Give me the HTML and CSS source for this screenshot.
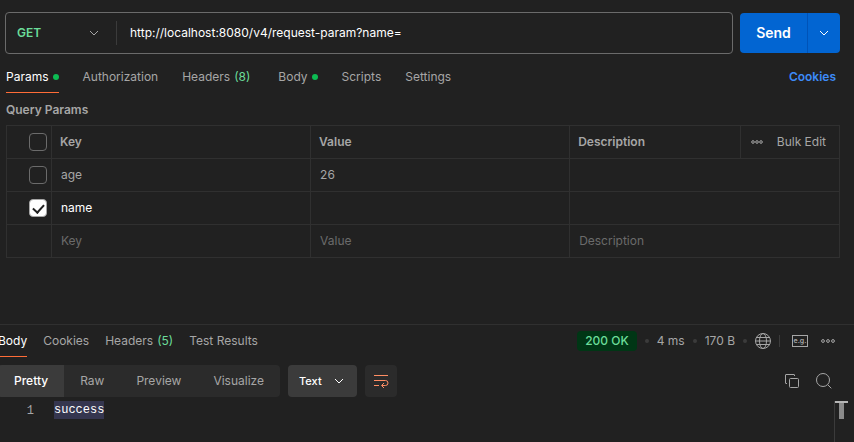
FILE: index.html
```
<!DOCTYPE html>
<html lang="en">
<head>
  <meta charset="UTF-8">
  <title>GET request-param</title>
  <link rel="stylesheet" href="styles.css">
</head>
<body>

  <!-- Request -->
  <main class="request">
    <form class="url-row">
      <div class="url-box">
        <div class="method">
          <select class="method-select" aria-label="Method">
            <option>GET</option>
            <option>POST</option>
            <option>PUT</option>
            <option>DELETE</option>
          </select>
          <svg class="chevron" viewBox="0 0 10 6"><path d="M1 1l4 4 4-4"/></svg>
        </div>
        <input class="url-input" type="text" aria-label="Request URL" value="http://localhost:8080/v4/request-param?name=">
      </div>
      <div class="send-group">
        <button type="button" class="send-btn">Send</button>
        <button type="button" class="send-more" aria-label="Send options">
          <svg class="chevron" viewBox="0 0 10 6"><path d="M1 1l4 4 4-4"/></svg>
        </button>
      </div>
    </form>

    <nav class="tabs">
      <a href="#params" class="tab active">Params<span class="dot"></span></a>
      <a href="#auth" class="tab">Authorization</a>
      <a href="#headers" class="tab tab-count">Headers <span class="count">(8)</span></a>
      <a href="#body" class="tab">Body<span class="dot"></span></a>
      <a href="#scripts" class="tab">Scripts</a>
      <a href="#settings" class="tab">Settings</a>
      <a href="#cookies" class="cookies-link">Cookies</a>
    </nav>

    <section class="params" id="params">
      <h2 class="params-title">Query Params</h2>
      <table class="params-table">
        <colgroup>
          <col class="col-check">
          <col class="col-key">
          <col class="col-value">
          <col class="col-desc">
          <col class="col-tools">
        </colgroup>
        <thead>
          <tr>
            <th class="check-cell"><input type="checkbox" class="check" aria-label="Select all"></th>
            <th>Key</th>
            <th>Value</th>
            <th>Description</th>
            <th class="tools-cell">
              <div class="tools">
                <button class="icon-btn" aria-label="More options">
                  <svg class="more-small" viewBox="0 0 12 4"><circle cx="2" cy="2" r="1.3"/><circle cx="6" cy="2" r="1.3"/><circle cx="10" cy="2" r="1.3"/></svg>
                </button>
                <button class="bulk-btn">Bulk Edit</button>
              </div>
            </th>
          </tr>
        </thead>
        <tbody>
          <tr>
            <td class="check-cell"><input type="checkbox" class="check" aria-label="Use age"></td>
            <td><input class="cell" type="text" aria-label="Key" value="age"></td>
            <td><input class="cell" type="text" aria-label="Value" value="26"></td>
            <td colspan="2"><input class="cell" type="text" aria-label="Description"></td>
          </tr>
          <tr class="enabled">
            <td class="check-cell"><input type="checkbox" class="check" aria-label="Use name" checked></td>
            <td><input class="cell" type="text" aria-label="Key" value="name"></td>
            <td><input class="cell" type="text" aria-label="Value"></td>
            <td colspan="2"><input class="cell" type="text" aria-label="Description"></td>
          </tr>
          <tr>
            <td></td>
            <td><input class="cell" type="text" aria-label="New key" placeholder="Key"></td>
            <td><input class="cell" type="text" aria-label="New value" placeholder="Value"></td>
            <td colspan="2"><input class="cell" type="text" aria-label="New description" placeholder="Description"></td>
          </tr>
        </tbody>
      </table>
    </section>
  </main>

  <!-- Response -->
  <section class="response">
    <div class="response-head">
      <nav class="response-tabs">
        <a href="#res-body" class="tab active">Body</a>
        <a href="#res-cookies" class="tab">Cookies</a>
        <a href="#res-headers" class="tab">Headers <span class="count">(5)</span></a>
        <a href="#res-tests" class="tab">Test Results</a>
      </nav>
      <div class="meta">
        <span class="status">200 OK</span>
        <span class="sep"></span>
        <span>4 ms</span>
        <span class="sep"></span>
        <span>170 B</span>
        <span class="sep"></span>
        <button class="icon-btn" aria-label="Network">
          <svg class="icon-16" viewBox="0 0 16 16"><circle cx="8" cy="8" r="7.5"/><ellipse cx="8" cy="8" rx="3.5" ry="7.5"/><path d="M1.500 4.500h13M1.500 11.500h13M.5 8h15"/></svg>
        </button>
        <span class="bar"></span>
        <button class="example-btn" aria-label="Save as example">e.g.</button>
        <button class="icon-btn" aria-label="More actions">
          <svg class="more" viewBox="0 0 14 4"><circle cx="2" cy="2" r="1.400"/><circle cx="7" cy="2" r="1.400"/><circle cx="12" cy="2" r="1.400"/></svg>
        </button>
      </div>
    </div>

    <div class="toolbar">
      <div class="views">
        <button class="view active">Pretty</button>
        <button class="view">Raw</button>
        <button class="view">Preview</button>
        <button class="view">Visualize</button>
      </div>
      <div class="format">
        <select class="format-select" aria-label="Format">
          <option>Text</option>
          <option>JSON</option>
          <option>XML</option>
          <option>HTML</option>
        </select>
        <svg class="chevron" viewBox="0 0 10 6"><path d="M1 1l4 4 4-4"/></svg>
      </div>
      <button class="wrap-btn" aria-label="Wrap lines">
        <svg class="icon-16" viewBox="0 0 16 16"><path d="M1 2.500h14M1 7.500h11.500a2.500 2.500 0 0 1 0 5H9M1 12.500h5M11 10L8.500 12.500 11 15"/></svg>
      </button>
      <div class="toolbar-right">
        <button class="icon-btn" aria-label="Copy">
          <svg class="icon-16" viewBox="0 0 16 16"><rect x="5.500" y="5.500" width="9" height="9" rx="1"/><path d="M3 10.500H2a.5.5 0 0 1-.5-.5V2a.5.5 0 0 1 .5-.5h8a.5.5 0 0 1 .5.5v1"/></svg>
        </button>
        <button class="icon-btn" aria-label="Search">
          <svg class="icon-16" viewBox="0 0 16 16"><circle cx="7" cy="7" r="6.500"/><path d="M11.700 11.700l3.600 3.600"/></svg>
        </button>
      </div>
    </div>

    <div class="code">
      <span class="line-no">1</span>
      <code class="line"><mark>success</mark></code>
      <div class="ruler"><span class="ruler-top"></span><span class="ruler-stem"></span></div>
    </div>
  </section>

</body>
</html>
```
FILE: styles.css
```
* {
  box-sizing: border-box;
}

body {
  margin: 0;
  min-height: 100vh;
  display: flex;
  flex-direction: column;
  overflow: hidden;
  background: #212121;
  color: #a6a6a6;
  font-family: Inter, "Liberation Sans", sans-serif;
  font-size: 12px;
  line-height: 16px;
}

button, input, select {
  font: inherit;
  color: inherit;
  background: none;
  border: none;
  padding: 0;
  margin: 0;
}

button {
  cursor: pointer;
}

select {
  appearance: none;
  width: 100%;
}

a {
  color: inherit;
  text-decoration: none;
}

svg {
  display: block;
  fill: none;
  stroke: currentColor;
}

.chevron {
  width: 10px;
  height: 6px;
  flex: none;
  pointer-events: none;
}

.icon-16 {
  width: 16px;
  height: 16px;
}

/* Request */
.request {
  flex: 1;
  padding: 12px 14px 0 6px;
}

.url-row {
  display: flex;
  align-items: center;
  gap: 7px;
  margin-left: -1px;
}

.url-box {
  flex: 1;
  display: flex;
  align-items: center;
  height: 42px;
  border: 1px solid #6b6b6b;
  border-radius: 4px;
}

.method {
  display: flex;
  align-items: center;
  width: 111px;
  height: 24px;
  padding: 0 17px 0 11px;
  border-right: 1px solid #3b3b3b;
}

.method-select {
  color: #6bdd9a;
  font-weight: 600;
}

.url-input {
  flex: 1;
  padding-left: 13px;
  color: #fff;
}

.send-group {
  display: flex;
  width: 100px;
  height: 40px;
  border-radius: 4px;
  overflow: hidden;
  background: #0265d2;
  color: #fff;
}

.send-btn {
  flex: 1;
  font-size: 14px;
  font-weight: 600;
}

.send-more {
  display: flex;
  align-items: center;
  justify-content: center;
  width: 33px;
  border-left: 1px solid #0053b8;
}

.tabs {
  display: flex;
  gap: 24px;
  margin-top: 8px;
}

.tab {
  display: flex;
  align-items: center;
  gap: 4px;
  height: 31px;
  border-bottom: 1px solid transparent;
  white-space: nowrap;
}

.tab.active {
  color: #fff;
  border-color: #ff6c37;
}

.tab-count {
  padding-right: 4px;
}

.count {
  color: #6bdd9a;
}

.dot {
  width: 6px;
  height: 6px;
  border-radius: 50%;
  background: #0cbb52;
}

.cookies-link {
  margin-left: auto;
  padding: 7px 4px 0 0;
  color: #3d8bf8;
  font-weight: 600;
}

.params-title {
  margin: 9px 0 7px;
  font-size: 12px;
  font-weight: 600;
}

.params-table {
  width: 100%;
  table-layout: fixed;
  border-collapse: collapse;
}

.col-check {
  width: 45px;
}

.col-key,
.col-value {
  width: 31.1%;
}

.col-tools {
  width: 99px;
}

.params-table th,
.params-table td {
  height: 33px;
  padding: 0 8px;
  border: 1px solid #303030;
  text-align: left;
  font-weight: 400;
}

.params-table th {
  font-weight: 600;
}

.params-table td {
  padding-left: 9px;
}

.params-table .check-cell {
  padding: 0 4px 0 0;
}

.check {
  appearance: none;
  display: block;
  width: 18px;
  height: 18px;
  margin-left: auto;
  border: 1px solid #6b6b6b;
  border-radius: 4px;
}

.check:checked {
  border-color: #a6a6a6;
  background: #fff;
}

.check:checked::before {
  content: "";
  display: block;
  width: 5px;
  height: 9px;
  margin: 2px auto 0;
  border: solid #212121;
  border-width: 0 2px 2px 0;
  transform: rotate(42deg);
}

.cell {
  display: block;
  width: 100%;
}

.cell::placeholder {
  color: #6b6b6b;
  opacity: 1;
}

.enabled .cell {
  color: #fff;
}

.tools {
  display: flex;
  align-items: center;
  justify-content: space-between;
  padding: 0 5px 0 2px;
}

.bulk-btn {
  font-weight: 400;
}

.more-small {
  width: 12px;
  height: 4px;
}

/* Response */
.response {
  height: 118px;
  margin-left: -2px;
  border-top: 1px solid #303030;
}

.response-head {
  display: flex;
  justify-content: space-between;
  padding-right: 19px;
}

.response-tabs {
  display: flex;
  gap: 16px;
}

.response-tabs .tab {
  height: 32px;
}

.meta {
  display: flex;
  align-items: center;
  gap: 8px;
}

.status {
  padding: 2px 8px;
  border-radius: 4px;
  background: #003615;
  color: #6bdd9a;
  font-weight: 500;
}

.sep {
  width: 4px;
  height: 4px;
  border-radius: 50%;
  background: #3b3b3b;
}

.bar {
  width: 1px;
  height: 12px;
  background: #3b3b3b;
}

.example-btn {
  display: flex;
  align-items: center;
  justify-content: center;
  width: 16px;
  height: 12px;
  margin: 0 5px 0 4px;
  border: 1px solid #a6a6a6;
  font-size: 7px;
  font-weight: 600;
  line-height: 8px;
}

.more {
  width: 14px;
  height: 4px;
}

.toolbar {
  display: flex;
  gap: 8px;
  margin-top: 8px;
  padding-right: 22px;
}

.views {
  display: flex;
  border-radius: 4px;
  overflow: hidden;
  background: #2b2b2b;
}

.view {
  height: 32px;
  padding: 0 16px;
}

.view.active {
  background: #3b3b3b;
  color: #fff;
  font-weight: 500;
}

.format {
  display: flex;
  align-items: center;
  width: 69px;
  height: 32px;
  padding: 0 13px 0 11px;
  border-radius: 4px;
  background: #3b3b3b;
  color: #fff;
}

.format-select {
  font-size: 11px;
  font-weight: 500;
}

.wrap-btn {
  display: flex;
  align-items: center;
  justify-content: center;
  width: 32px;
  height: 32px;
  border-radius: 4px;
  background: #2b2b2b;
  color: #ff8e64;
}

.toolbar-right {
  display: flex;
  align-items: center;
  gap: 16px;
  margin-left: auto;
}

.code {
  display: flex;
  margin-top: 4px;
  font: 12px/18px "Liberation Mono", monospace;
}

.line-no {
  width: 36px;
  padding-top: 1px;
  text-align: right;
}

.line {
  flex: 1;
  padding-left: 20px;
  font: inherit;
}

.line mark {
  display: inline-block;
  padding-top: 1px;
  line-height: 17px;
  background: #35364f;
  color: #fff;
}

.ruler {
  width: 14px;
  height: 41px;
  margin-right: 6px;
  border-left: 1px solid #3b3b3b;
}

.ruler-top,
.ruler-stem {
  display: block;
  height: 2px;
  background: #b5b5b5;
}

.ruler-stem {
  width: 5px;
  height: 16px;
  margin-left: 4px;
  background: #8a8a8a;
}
```
